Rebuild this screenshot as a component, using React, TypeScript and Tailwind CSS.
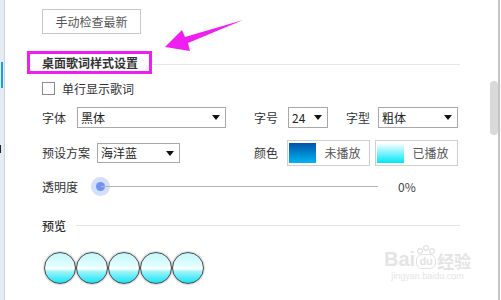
import React from "react";

function Caret() {
  return (
    <svg width="8" height="5" viewBox="0 0 8 5" className="shrink-0">
      <polygon points="0,0 8,0 4,5" fill="#111" />
    </svg>
  );
}

function Select({ value, className }: { value: string; className: string }) {
  return (
    <div className={`flex items-center justify-between border border-[#a8a8a8] bg-white pl-[3px] pr-[5px] ${className}`}>
      <span className="text-[#222]">{value}</span>
      <Caret />
    </div>
  );
}

function ColorButton({ label, swatch }: { label: string; swatch: string }) {
  return (
    <div className="flex h-[26px] w-[83px] items-center border border-[#cfcfcf] bg-white pl-[1px]">
      <div className={`h-[20px] w-[27px] ${swatch}`} />
      <span className="flex-1 text-center text-[#555]">{label}</span>
    </div>
  );
}

export default function App() {
  return (
    <div className="relative flex h-[300px] w-[501px] overflow-hidden bg-white font-['Noto_Sans_CJK_SC',sans-serif] text-[12px] leading-none text-[#333]">
      {/* 左侧边栏 */}
      <div className="flex w-[5px] flex-col border-r border-[#c9d3dd] bg-[#e4ebf3]">
        <div className="ml-[1px] mt-[62px] h-[26px] w-[2px] bg-[#1b9be8]" />
        <div className="mt-[57px] h-[8px] w-[1px] bg-[#222]" />
      </div>

      {/* 主体 */}
      <div className="flex flex-1 flex-col pl-[37px] pr-[27px] pt-[9px]">
        <div className="flex h-[25px] w-[99px] items-center justify-center border border-[#c8c8c8] text-[#555]">
          手动检查最新
        </div>

        <div className="mt-[17px] flex h-[23px] items-center">
          <span className="ml-[-15px] flex h-[23px] items-center border-[3px] border-[#f01ef0] pl-[12px] pr-[11px] font-bold">
            桌面歌词样式设置
          </span>
          <div className="mt-[3px] h-px flex-1 bg-[#e6e6e6]" />
        </div>

        <div className="mt-[8px] flex items-center">
          <div className="h-[13px] w-[13px] border border-[#8a8a8a] bg-white" />
          <span className="ml-[7px]">单行显示歌词</span>
        </div>

        <div className="mt-[12px] flex h-[21px] items-center">
          <span className="w-[35px]">字体</span>
          <Select value="黑体" className="h-[21px] w-[149px]" />
          <span className="ml-[28px] w-[34px]">字号</span>
          <Select value="24" className="h-[21px] w-[40px]" />
          <span className="ml-[18px] w-[32px]">字型</span>
          <Select value="粗体" className="h-[21px] w-[80px]" />
        </div>

        <div className="mt-[12px] flex h-[26px] items-center">
          <span className="w-[55px]">预设方案</span>
          <Select value="海洋蓝" className="h-[20px] w-[83px]" />
          <span className="ml-[74px] w-[33px]">颜色</span>
          <ColorButton label="未播放" swatch="bg-[linear-gradient(to_bottom,#0054a6,#00b4f2)]" />
          <div className="w-[5px]" />
          <ColorButton label="已播放" swatch="bg-[linear-gradient(to_bottom,#ffffff,#00e6f8)]" />
        </div>

        <div className="mt-[11px] flex h-[19px] items-center">
          <span className="w-[49px]">透明度</span>
          <div className="relative flex w-[287px] items-center">
            <div className="flex h-[19px] w-[19px] items-center justify-center rounded-full bg-[#d3defa]">
              <div className="h-[9px] w-[9px] rounded-full bg-[#7391f2]" />
            </div>
            <div className="ml-[-9px] h-px flex-1 bg-[#b4b4b4]" />
          </div>
          <span className="ml-[20px] text-[#444]">0%</span>
        </div>

        <div className="mt-[20px] flex h-[20px] items-center">
          <span className="w-[34px] font-medium text-[#333]">预览</span>
          <div className="mt-[-2px] h-px flex-1 bg-[#e6e6e6]" />
        </div>

        <div className="ml-[2px] mt-[16px] flex">
          {[0, 1, 2, 3, 4].map((i) => (
            <div
              key={i}
              className="h-[32px] w-[32px] rounded-full border-[1.5px] border-[#4a4a4a] bg-[linear-gradient(to_bottom,#c2f7fd_0%,#e6fdff_45%,#ffffff_52%,#9ef3fa_62%,#18e3f4_100%)] shadow-[0_0_2px_rgba(0,0,0,0.45)]"
            />
          ))}
        </div>
      </div>

      {/* 滚动条 */}
      <div className="flex w-[14px]">
        <div className="ml-[3px] mt-[81px] h-[54px] w-[8px] rounded-[4px] bg-[#d9d9d9]" />
        <div className="h-full w-[2px] bg-[#c4c4c4]" />
      </div>

      {/* 标注箭头 */}
      <svg className="pointer-events-none absolute left-0 top-0" width="501" height="300">
        <polygon points="165,47 182,30 185,37 243,20 188,43 190,51" fill="#f01ef0" />
      </svg>

      {/* 水印 */}
      <div className="pointer-events-none absolute left-[384px] top-[245px] flex flex-col items-center font-['Liberation_Sans',sans-serif] text-[#e4e4e4]">
        <div className="flex items-end">
          <span className="text-[20px] font-bold leading-none">Bai</span>
          <div className="mx-[1px] flex flex-col items-center">
            <svg width="20" height="9" viewBox="0 0 20 9">
              <circle cx="4" cy="6" r="2.4" fill="none" stroke="#e2e2e2" strokeWidth="1.2" />
              <circle cx="10" cy="3" r="2.4" fill="none" stroke="#e2e2e2" strokeWidth="1.2" />
              <circle cx="16" cy="6" r="2.4" fill="none" stroke="#e2e2e2" strokeWidth="1.2" />
            </svg>
            <span className="rounded-[6px] border border-[#e2e2e2] px-[2px] text-[11px] font-bold leading-[13px]">du</span>
          </div>
          <span className="font-['Noto_Sans_CJK_SC',sans-serif] text-[17px] font-bold leading-none">经验</span>
        </div>
        <span className="mt-[3px] text-[9px] leading-none">jingyan.baidu.com</span>
      </div>
    </div>
  );
}
